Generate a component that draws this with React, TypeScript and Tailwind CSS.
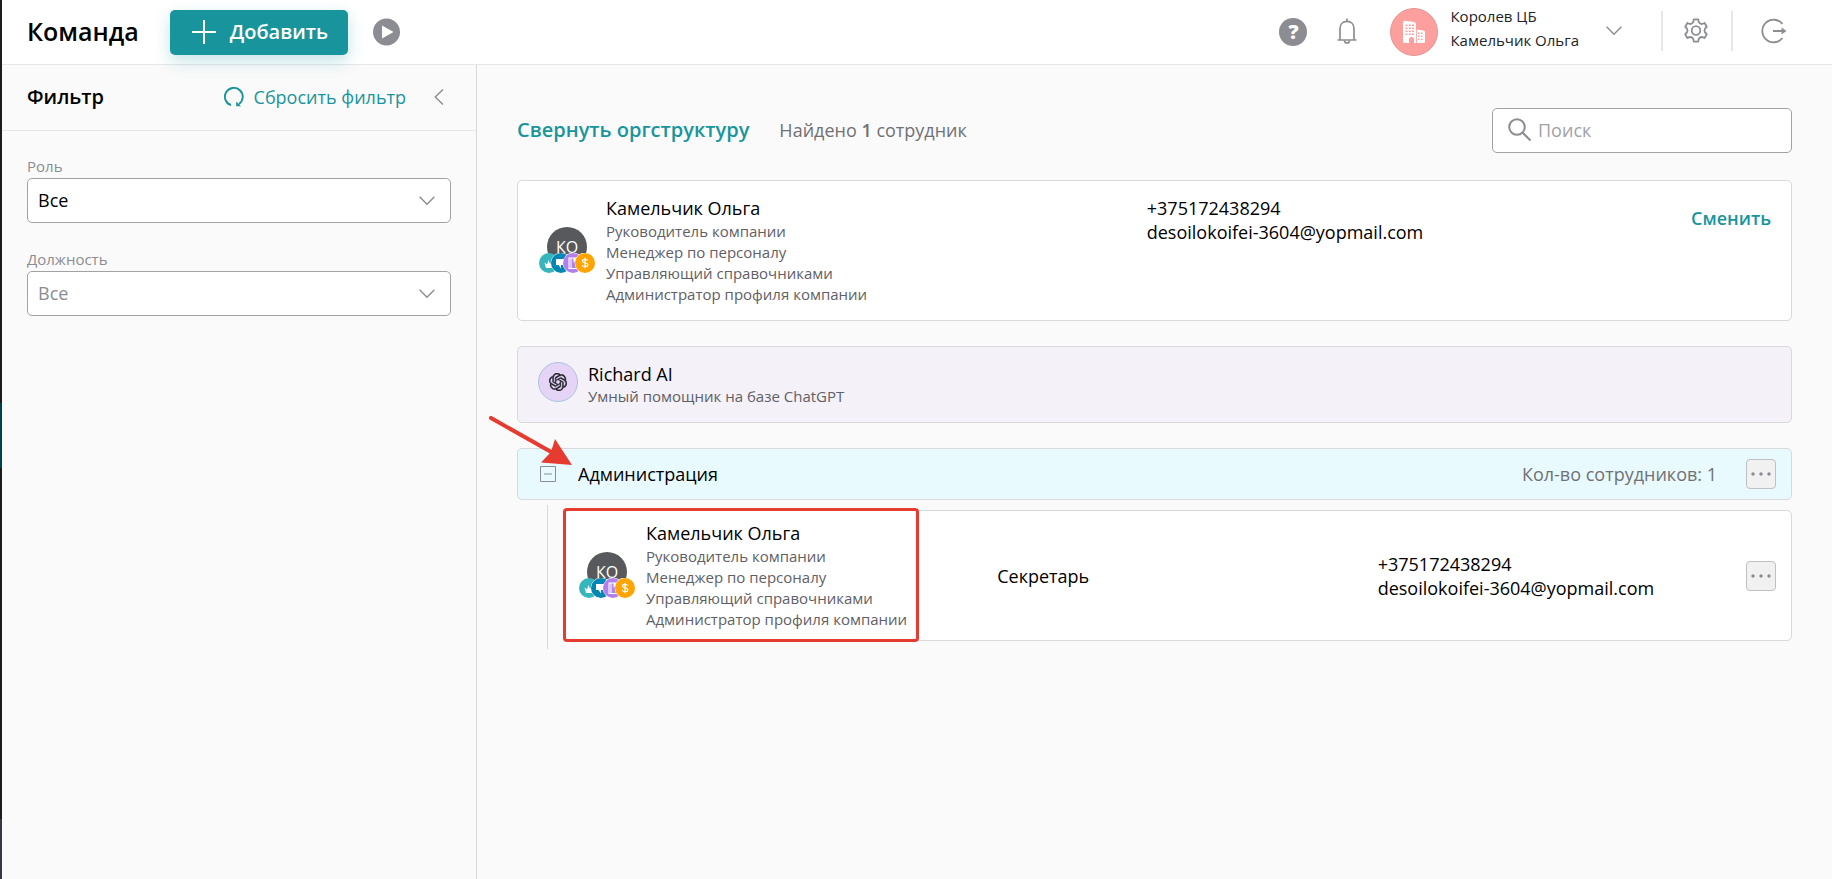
import type { ReactNode } from 'react';
import { SiOpenai } from 'react-icons/si';

interface Employee {
  name: string;
  roles: string[];
  phone: string;
  email: string;
}

const employee: Employee = {
  name: 'Камельчик Ольга',
  roles: [
    'Руководитель компании',
    'Менеджер по персоналу',
    'Управляющий справочниками',
    'Администратор профиля компании',
  ],
  phone: '+375172438294',
  email: 'desoilokoifei-3604@yopmail.com',
};

const ChevronDown = ({ className = '' }: { className?: string }) => (
  <svg width="16" height="10" viewBox="0 0 16 10" fill="none" stroke="#8b8d92" strokeWidth="1.4" className={className}>
    <path d="M0.6 0.8 8 8.2 15.4 0.8" />
  </svg>
);

const BuildingIcon = () => (
  <svg width="24" height="24" viewBox="0 0 24 24">
    <path d="M1 2.5Q1 .5 3 .8L12 2q2 .3 2 2v5.500l7.500 1q1.500.2 1.500 2V21.500q0 1.500-1.500 1.500H12v-3.500a2.500 2.500 0 0 0-5 0V23H2.500Q1 23 1 21.500z" fill="#fff" />
    <g fill="#fd9f9d">
      <path d="M3.500 4.500h2V6h-2zM6.800 4.500h2V6h-2zM10 4.500h2V6h-2z" />
      <path d="M3.500 7.500h2V9h-2zM6.800 7.500h2V9h-2zM10 7.500h2V9h-2z" />
      <path d="M3.500 10.500h2V12h-2zM6.800 10.500h2V12h-2zM10 10.500h2V12h-2z" />
      <path d="M3.500 13.500h2V15h-2zM6.800 13.500h2V15h-2zM10 13.500h2V15h-2z" />
      <path d="M16 12.500h1.600V14H16zM19 12.500h1.600V14H19zM16 15.500h1.600V17H16zM19 15.500h1.600V17H19zM16 18.500h1.600V20H16zM19 18.500h1.600V20H19z" />
      <path d="M14 9h.8v14H14z" />
    </g>
  </svg>
);

const RoleBadges = () => (
  <svg width="56" height="20" viewBox="0 0 56 20" className="absolute -left-2 top-[26px]">
    <circle cx="10" cy="10" r="10" fill="#36b5bd" />
    <path d="M5.5 9.5 8 11.5l1.6-4.5 1.4 4 2-2.5V15H7z" fill="#fff" />
    <circle cx="22" cy="10" r="10.4" fill="#fff" />
    <circle cx="22" cy="10" r="10" fill="#0087b3" />
    <path d="M17 6h10v6h-5v3.5L19.5 12H17z" fill="#fff" />
    <circle cx="34" cy="10" r="10.4" fill="#fff" />
    <circle cx="34" cy="10" r="10" fill="#b280ec" />
    <path d="M30 5h8v10.5h-8zM32 5v10.5" fill="none" stroke="#fff" strokeWidth="1.1" />
    <path d="M34.5 5v4.5l1.2-1 1.2 1V5z" fill="#fff" />
    <circle cx="46" cy="10" r="10.4" fill="#fff" />
    <circle cx="46" cy="10" r="10" fill="#ffa400" />
    <path
      d="M48.6 7.6c-.4-.9-1.3-1.3-2.6-1.3-1.5 0-2.5.7-2.5 1.8 0 2.6 5.3 1 5.3 3.7 0 1.2-1.1 1.9-2.7 1.9-1.5 0-2.5-.5-2.9-1.6M46 4.8v10.4"
      fill="none"
      stroke="#fff"
      strokeWidth="1.2"
    />
  </svg>
);

const EmployeeAvatar = () => (
  <div className="relative mb-2 h-10 w-10 shrink-0">
    <div className="flex h-10 w-10 items-center justify-center rounded-full bg-[#58595c] text-base text-white">
      КО
    </div>
    <RoleBadges />
  </div>
);

const EmployeeInfo = ({ person }: { person: Employee }) => (
  <div className="flex items-center gap-[19px]">
    <EmployeeAvatar />
    <div>
      <p className="text-lg leading-[25px]">{person.name}</p>
      <ul className="text-[15px] leading-[21px] text-[#5f6065]">
        {person.roles.map((role) => (
          <li key={role}>{role}</li>
        ))}
      </ul>
    </div>
  </div>
);

const Contacts = ({ person }: { person: Employee }) => (
  <div className="text-lg leading-6">
    <p>{person.phone}</p>
    <p>{person.email}</p>
  </div>
);

const MoreButton = () => (
  <button
    aria-label="Ещё"
    className="flex h-[30px] w-[30px] shrink-0 items-center justify-center rounded border border-[#bfc0c2] bg-[#f1f1f1]"
  >
    <svg width="20" height="4" viewBox="0 0 20 4" fill="#8b8d92">
      <circle cx="2" cy="2" r="1.7" />
      <circle cx="10" cy="2" r="1.7" />
      <circle cx="18" cy="2" r="1.7" />
    </svg>
  </button>
);

const FilterSelect = ({ id, label, muted = false }: { id: string; label: string; muted?: boolean }) => (
  <div>
    <label htmlFor={id} className="mb-0.5 block text-[15px] leading-5 text-[#8b8d92]">
      {label}
    </label>
    <div className="relative">
      <select
        id={id}
        className={`h-[45px] w-full appearance-none rounded-[5px] border border-[#a1a2a6] bg-white px-[10px] pb-0.5 text-lg ${muted ? 'text-[#8b8d92]' : 'text-black'}`}
      >
        <option>Все</option>
      </select>
      <ChevronDown className="pointer-events-none absolute right-4 top-[18px]" />
    </div>
  </div>
);

const Card = ({ className = '', children }: { className?: string; children: ReactNode }) => (
  <div className={`rounded-[5px] border border-[#d8d9db] ${className}`}>{children}</div>
);

const Header = () => (
  <header className="flex h-[65px] items-center border-b border-[#e6e7e9] bg-white pl-[25px] pr-[45px]">
    <h1 className="text-[25px] font-semibold">Команда</h1>
    <button className="relative ml-[31px] flex h-[45px] items-center gap-[14px] rounded-[5px] bg-[#18959c] pl-[22px] pr-5 text-xl font-semibold text-white shadow-[0_6px_16px_rgba(24,149,156,0.25)]">
      <svg width="24" height="24" viewBox="0 0 24 24" stroke="#fff" strokeWidth="2">
        <path d="M12 0v24M0 12h24" />
      </svg>
      Добавить
    </button>
    <button aria-label="Видео" className="ml-[25px]">
      <svg width="27" height="28" viewBox="0 0 27 28">
        <circle cx="13.5" cy="14" r="13.5" fill="#8b8d92" />
        <path d="M9 7.5v13L20.5 14z" fill="#fff" />
      </svg>
    </button>

    <div className="ml-auto flex items-center">
      <button aria-label="Помощь" className="h-7 w-7 rounded-full bg-[#8b8d92] text-xl font-extrabold leading-7 text-white">
        ?
      </button>
      <button aria-label="Уведомления" className="mb-0.5 ml-[30px]">
        <svg width="20" height="26" viewBox="0 0 20 26" fill="none" stroke="#8b8d92" strokeWidth="1.7">
          <path d="M0.5 22h19M3 22V10.5C3 6 6 3.4 10 3.4S17 6 17 10.5V22M10 0.5v3" />
          <path d="M7.5 22.5c0 1.6 1 2.5 2.5 2.5s2.5-.9 2.5-2.5" />
        </svg>
      </button>
      <div className="ml-[33px] flex h-12 w-12 items-center justify-center rounded-full border border-[#e59795] bg-[#fd9f9d]">
        <BuildingIcon />
      </div>
      <div className="mb-2 ml-3 text-[15px] leading-6 text-[#222327]">
        <p>Королев ЦБ</p>
        <p>Камельчик Ольга</p>
      </div>
      <button aria-label="Профиль" className="mb-0.5 ml-[27px]">
        <ChevronDown />
      </button>
      <div className="mb-0.5 ml-[39px] h-10 w-0.5 bg-[#e6e7e9]" />
      <button aria-label="Настройки" className="mb-0.5 ml-5">
        <svg width="26" height="26" viewBox="0 0 26 26" fill="none" stroke="#8b8d92" strokeWidth="1.8" strokeLinejoin="round">
          <path d="M10.8 1.3h4.400c.2 2.600 1 4.600 3.300 4.700c1 0 2-.4 3.100-1l2.200 3.800c-1.600 1.400-2.400 2.200-2.400 3.700s.8 2.300 2.400 3.700l-2.200 3.800c-1.100-.6-2.100-1-3.100-1c-2.300.1-3.100 2.100-3.300 4.700h-4.400c-.2-2.600-1-4.600-3.300-4.700c-1 0-2 .4-3.100 1l-2.200-3.800c1.600-1.400 2.400-2.200 2.400-3.700s-.8-2.300-2.400-3.700l2.200-3.800c1.100.6 2.100 1 3.100 1c2.300-.1 3.100-2.100 3.300-4.700z" />
          <circle cx="13" cy="12.5" r="4.300" />
        </svg>
      </button>
      <div className="mb-0.5 ml-[22px] h-10 w-0.5 bg-[#e6e7e9]" />
      <button aria-label="Выйти" className="mb-0.5 ml-7">
        <svg width="26" height="26" viewBox="0 0 26 26" fill="none" stroke="#8b8d92" strokeWidth="1.8">
          <path d="M21.500 6A11.300 11.300 0 1 0 21.500 20M12 13h10" />
          <path d="M20.500 9.500 25.500 13l-5 3.500z" fill="#8b8d92" stroke="none" />
        </svg>
      </button>
    </div>
  </header>
);

const Filters = () => (
  <aside className="w-[475px] shrink-0 border-r border-[#d8d9db]">
    <div className="flex h-[66px] items-center border-b border-[#e6e7e9] pb-0.5 pl-[25px] pr-8">
      <h2 className="text-xl font-semibold">Фильтр</h2>
      <button className="ml-auto flex items-center gap-[10px] text-lg text-[#18959c]">
        <svg width="20" height="20" viewBox="0 0 20 20" fill="none" stroke="#18959c" strokeWidth="1.9">
          <path d="M7 18.2A8.900 8.900 0 1 1 15 17" />
          <path d="M12.200 14.500v4.800h4.800z" fill="#18959c" stroke="none" />
        </svg>
        Сбросить фильтр
      </button>
      <button aria-label="Свернуть" className="ml-7">
        <svg width="10" height="16" viewBox="0 0 10 16" fill="none" stroke="#8b8d92" strokeWidth="1.4">
          <path d="M9 0.6 1.2 8 9 15.4" />
        </svg>
      </button>
    </div>
    <div className="flex flex-col gap-[26px] px-[25px] pt-[25px]">
      <FilterSelect id="role" label="Роль" />
      <FilterSelect id="position" label="Должность" muted />
    </div>
  </aside>
);

const Team = () => (
  <main className="min-w-0 flex-1 px-10 pt-[43px]">
    <div className="flex items-center">
      <button className="pb-0.5 text-xl font-semibold text-[#18959c]">Свернуть оргструктуру</button>
      <p className="ml-[30px] pb-0.5 text-lg text-[#707175]">
        Найдено <span className="font-semibold">1</span> сотрудник
      </p>
      <div className="relative ml-auto w-[300px]">
        <svg width="24" height="24" viewBox="0 0 24 24" fill="none" stroke="#8b8d92" strokeWidth="2" className="absolute left-4 top-[10px]">
          <circle cx="9" cy="9" r="7.8" />
          <path d="m14.5 14.5 8 8" />
        </svg>
        <input
          type="search"
          aria-label="Поиск"
          placeholder="Поиск"
          className="h-[45px] w-full rounded-[5px] border border-[#a1a2a6] bg-white pb-0.5 pl-[45px] pr-3 text-lg placeholder:text-[#a1a2a6]"
        />
      </div>
    </div>

    <Card className="mt-[27px] flex bg-white py-[15px] pl-[29px] pr-5">
      <div className="w-[49%]">
        <EmployeeInfo person={employee} />
      </div>
      <Contacts person={employee} />
      <button className="ml-auto mt-2.5 self-start text-lg font-semibold leading-6 text-[#18959c]">Сменить</button>
    </Card>

    <Card className="mt-[25px] flex gap-[10px] bg-[#f4f1f9] py-[15px] pl-5">
      <div className="flex h-10 w-10 items-center justify-center rounded-full border border-[#a9c5dc] bg-[#e5d4f6]">
        <SiOpenai size={18} color="#222327" stroke="#222327" strokeWidth="0.5" />
      </div>
      <div>
        <p className="text-lg leading-6">Richard AI</p>
        <p className="text-[15px] leading-[21px] text-[#5f6065]">Умный помощник на базе ChatGPT</p>
      </div>
    </Card>

    <section className="relative mt-[25px]">
      <Card className="flex h-[52px] items-center bg-[#e8fafd] pl-[22px] pr-[15px]">
        <button aria-label="Свернуть отдел">
          <svg width="16" height="16" viewBox="0 0 16 16" fill="none" stroke="#8b8d92">
            <path d="M0.5 0.5h15v15h-15zM4 8h8" />
          </svg>
        </button>
        <h3 className="ml-[22px] text-lg">Администрация</h3>
        <p className="ml-auto mr-[29px] text-lg text-[#707175]">Кол-во сотрудников: 1</p>
        <MoreButton />
      </Card>

      <div className="ml-[30px] mt-[5px] border-l border-[#d8d9db] pb-2 pl-[15px] pt-[5px]">
        <Card className="relative flex items-center bg-white py-[10px] pl-[23px] pr-[15px]">
          <div className="w-[34.5%]">
            <EmployeeInfo person={employee} />
          </div>
          <p className="w-[32%] text-lg">Секретарь</p>
          <Contacts person={employee} />
          <div className="ml-auto">
            <MoreButton />
          </div>
          <div className="pointer-events-none absolute -bottom-0.5 -left-px -top-[3px] w-[356px] rounded border-[3px] border-[#e63b30]" />
        </Card>
      </div>

      <svg width="86" height="52" viewBox="0 0 86 52" className="pointer-events-none absolute -left-7 -top-8">
        <path d="M2 2 64 37" stroke="#e63b30" strokeWidth="4" strokeLinecap="round" />
        <path d="M66 23 83 49 52 46.5 62 36z" fill="#e63b30" />
      </svg>
    </section>
  </main>
);

export default function App() {
  return (
    <div className="flex min-h-screen bg-[#fafafa] font-['Open_Sans','Noto_Sans',sans-serif] text-black">
      <div className="flex w-0.5 shrink-0 flex-col bg-[#1c1c1f]">
        <div className="mt-[403px] h-[65px] bg-[#00424b]" />
        <div className="mt-auto h-[60px] bg-[#38373f]" />
      </div>
      <div className="flex min-w-0 flex-1 flex-col">
        <Header />
        <div className="flex flex-1">
          <Filters />
          <Team />
        </div>
      </div>
    </div>
  );
}
